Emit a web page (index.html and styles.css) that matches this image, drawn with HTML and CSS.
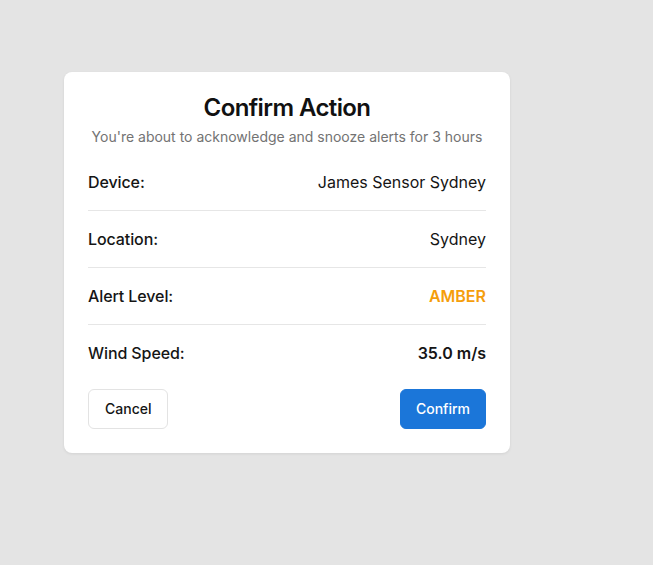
FILE: index.html
```html
<!DOCTYPE html>
<html lang="en">
<head>
<meta charset="utf-8">
<title>Confirm Action</title>
<link rel="stylesheet" href="styles.css">
</head>
<body>
<div class="page">
  <div class="dialog">
    <div class="header">
      <h1 class="title">Confirm Action</h1>
      <p class="subtitle">You're about to acknowledge and snooze alerts for 3 hours</p>
    </div>
    <div class="rows">
      <div class="row"><span class="label">Device:</span><span class="value">James Sensor Sydney</span></div>
      <div class="row"><span class="label">Location:</span><span class="value">Sydney</span></div>
      <div class="row"><span class="label">Alert Level:</span><span class="value value-amber">AMBER</span></div>
      <div class="row"><span class="label">Wind Speed:</span><span class="value value-strong">35.0 m/s</span></div>
    </div>
    <div class="actions">
      <button class="btn btn-cancel">Cancel</button>
      <button class="btn btn-confirm">Confirm</button>
    </div>
  </div>
</div>
</body>
</html>
```
FILE: styles.css
```css
* { box-sizing: border-box; }
html, body {
  margin: 0;
  padding: 0;
  background: #e4e4e4;
  font-family: Inter, "Noto Sans", sans-serif;
  color: #151515;
}
.page {
  min-height: 565px;
  padding: 72px 0 0 64px;
}
.dialog {
  width: 446px;
  background: #ffffff;
  border-radius: 8px;
  box-shadow: 0 1px 3px rgba(0,0,0,0.08);
  padding: 22px 24px 24px;
}
.header {
  text-align: center;
  margin-bottom: 7px;
}
.title {
  margin: 0;
  font-size: 24px;
  line-height: 1.2;
  font-weight: 600;
  letter-spacing: -0.6px;
  color: #111111;
}
.subtitle {
  margin: 4px 0 0;
  font-size: 14px;
  line-height: 20px;
  color: #737373;
}
.row {
  display: flex;
  justify-content: space-between;
  align-items: center;
  padding: 16px 0;
  font-size: 16px;
  line-height: 24px;
  border-bottom: 1px solid #e6e6e6;
}
.row:last-child { border-bottom: none; }
.label { font-weight: 500; letter-spacing: -0.1px; color: #151515; }
.value { font-weight: 400; color: #151515; }
.value-amber { font-weight: 600; color: #f59e0b; }
.value-strong { font-weight: 600; }
.actions {
  display: flex;
  justify-content: space-between;
  margin-top: 8px;
}
.btn {
  height: 40px;
  padding: 0 16px;
  border-radius: 6px;
  font-family: Inter, "Noto Sans", sans-serif;
  font-size: 14px;
  font-weight: 500;
  cursor: pointer;
}
.btn-cancel {
  background: #ffffff;
  border: 1px solid #e3e3e3;
  color: #151515;
}
.btn-confirm {
  padding: 0 15px;
  background: #1b76d9;
  border: 1px solid #1b76d9;
  color: #ffffff;
}
```
